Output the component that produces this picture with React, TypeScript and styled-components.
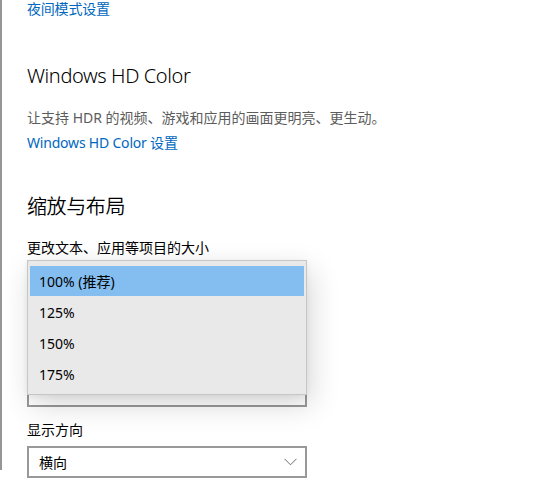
import React from 'react';
import styled, { createGlobalStyle } from 'styled-components';

const GlobalStyle = createGlobalStyle`
  body {
    margin: 0;
    background: #ffffff;
    font-family: "Noto Sans", "Noto Sans CJK SC", sans-serif;
    color: #000000;
    overflow: hidden;
  }
`;

const Shell = styled.div`
  display: flex;
  width: 534px;
  height: 491px;
`;

const Rail = styled.div`
  width: 2px;
  height: 470px;
  background: #969696;
  flex-shrink: 0;
`;

const Content = styled.div`
  display: flex;
  flex-direction: column;
  align-items: flex-start;
  padding-left: 25px;
`;

const Link = styled.a<{ $gap: number }>`
  margin-top: ${(p) => p.$gap}px;
  font-size: 14px;
  line-height: 20px;
  letter-spacing: -0.2px;
  color: #0067c0;
  text-decoration: none;
  cursor: pointer;
`;

const Heading = styled.h2<{ $gap: number }>`
  margin: ${(p) => p.$gap}px 0 0;
  font-size: 20px;
  line-height: 28px;
  font-weight: 350;
  letter-spacing: -0.4px;
`;

const Text = styled.p<{ $gap: number; $muted?: boolean }>`
  margin: ${(p) => p.$gap}px 0 0;
  font-size: 14px;
  line-height: 20px;
  color: ${(p) => (p.$muted ? '#5c5c5c' : '#000000')};
`;

const ComboArea = styled.div`
  position: relative;
  margin-top: 2px;
  height: 147px;
  width: 280px;
  display: flex;
  flex-direction: column;
  justify-content: flex-end;
`;

const Combo = styled.div<{ $gap?: number }>`
  margin-top: ${(p) => p.$gap ?? 0}px;
  box-sizing: border-box;
  width: 280px;
  height: 32px;
  border: 2px solid #999999;
  background: #ffffff;
  display: flex;
  align-items: center;
  justify-content: space-between;
  padding: 0 8px 0 10px;
  font-size: 14px;
`;

const Popup = styled.ul`
  position: absolute;
  top: 0;
  left: 0;
  box-sizing: border-box;
  width: 280px;
  margin: 0;
  padding: 4px 1px;
  list-style: none;
  background: #e9e9e9;
  border: 1px solid #c6c6c6;
  box-shadow: 4px 10px 28px rgba(0, 0, 0, 0.16), 0 2px 6px rgba(0, 0, 0, 0.06);
`;

const Option = styled.li<{ $selected?: boolean }>`
  height: 30px;
  margin: 1px;
  padding-left: 9px;
  display: flex;
  align-items: center;
  font-size: 14px;
  background: ${(p) => (p.$selected ? '#84bef0' : 'transparent')};
`;

const Chevron = () => (
  <svg width="13" height="8" viewBox="0 0 13 8" fill="none">
    <path d="M0.5 0.8 L6.5 6.8 L12.5 0.8" stroke="#6a6a6a" strokeWidth="1" />
  </svg>
);

const scales = ['100% (推荐)', '125%', '150%', '175%'];

const App = () => (
  <>
    <GlobalStyle />
    <Shell>
      <Rail />
      <Content>
        <Link $gap={-1}>夜间模式设置</Link>
        <Heading $gap={43}>Windows HD Color</Heading>
        <Text $gap={18} $muted>让支持 HDR 的视频、游戏和应用的画面更明亮、更生动。</Text>
        <Link $gap={5}>Windows HD Color 设置</Link>
        <Heading $gap={40}>缩放与布局</Heading>
        <Text $gap={17}>更改文本、应用等项目的大小</Text>
        <ComboArea>
          <Combo />
          <Popup>
            {scales.map((s, i) => (
              <Option key={s} $selected={i === 0}>{s}</Option>
            ))}
          </Popup>
        </ComboArea>
        <Text $gap={13}>显示方向</Text>
        <Combo $gap={6}>
          <span>横向</span>
          <Chevron />
        </Combo>
      </Content>
    </Shell>
  </>
);

export default App;
